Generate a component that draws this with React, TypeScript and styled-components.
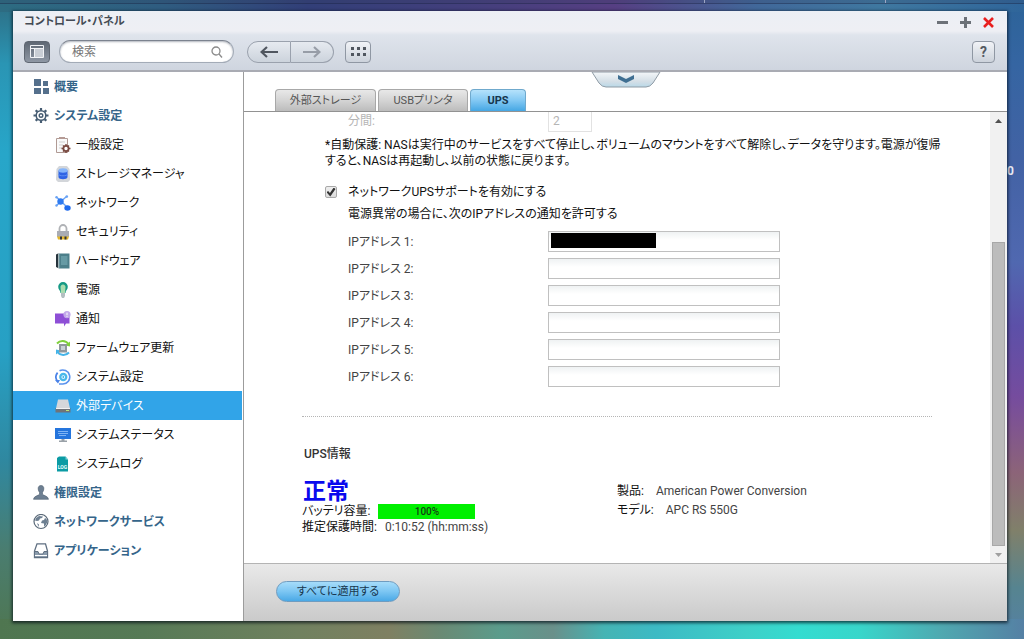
import React from "react";
import styled, { createGlobalStyle, css } from "styled-components";

const Global = createGlobalStyle`
  *, *::before, *::after { box-sizing: border-box; }
  html, body, #root { height: 100%; }
  body {
    margin: 0;
    font-family: Roboto, "Noto Sans CJK JP", sans-serif;
    font-size: 12px;
    line-height: 16px;
    color: #444;
    font-feature-settings: "palt";
  }
  button, input { font: inherit; font-feature-settings: inherit; color: inherit; margin: 0; }
  h1, h2, p, ul, dl, dd { margin: 0; padding: 0; }
  ul { list-style: none; }
`;

const Desktop = styled.div`
  position: relative;
  height: 100vh;
  min-height: 560px;
  display: flex;
  flex-direction: column;
  overflow: hidden;
  background:
    linear-gradient(90deg, #4f7650 0%, #567a56 14%, #70815f 29%, #7f8062 38%, #6a8a74 43%, #5a9c8c 49%, #6a908a 54%, #45b4b4 59%, #3cbac4 64%, #3ed0c8 73%, #34dcd0 78%, #38d6ca 84%, #4fa8b0 92%, #5580a4 100%) bottom / 100% 20px no-repeat,
    linear-gradient(90deg, #2d6c82 0%, #2f5c80 16%, #323f78 30%, #463f7d 48%, #563f83 60%, #41689a 74%, #3f78a0 86%, #2f659a 100%) top / 100% 12px no-repeat,
    linear-gradient(180deg, #2d6c82 0%, #2a95b4 10%, #27a6c9 24%, #27a0c4 55%, #2f88a0 72%, #4a7d70 86%, #4f7650 100%) left / 50% 100% no-repeat,
    linear-gradient(180deg, #2c6398 0%, #3565a2 10%, #4262a4 25%, #5068b0 41%, #5c50a8 51%, #754c9e 62%, #80558f 67%, #8c6478 74%, #80806a 83%, #568490 92%, #5580a4 100%);
`;

const DesktopBar = styled.div`
  flex: none;
  height: 4px;
  background: rgba(50, 60, 90, 0.2);
  border-bottom: 1px solid rgba(20, 30, 60, 0.35);
  display: flex;
  justify-content: flex-end;
  gap: 180px;
  padding-right: 138px;
`;

const BarTick = styled.i`
  width: 1px;
  height: 3px;
  background: #9da6c4;
`;

const DesktopLabel = styled.span`
  position: absolute;
  top: 163px;
  right: 10px;
  font-size: 12px;
  font-weight: 700;
  color: #e8eaf4;
`;

const Window = styled.main`
  position: relative;
  flex: 1;
  min-height: 0;
  margin: 7px 17px 18px 13px;
  display: flex;
  flex-direction: column;
  background: #fff;
  box-shadow: 0 1px 3px 1px rgba(0, 10, 20, 0.7);
`;

const Header = styled.header`
  flex: none;
  border-bottom: 2px solid #a9abb3;
  background: linear-gradient(180deg, #eceff5 0, #eeeff4 20px, #dfe4ec 24px, #cfd5df 100%);
`;

const TitleBar = styled.div`
  display: flex;
  align-items: center;
  justify-content: space-between;
  height: 22px;
  padding: 0 12px 0 11px;
`;

const Title = styled.h1`
  font-size: 11px;
  line-height: 16px;
  font-weight: 700;
  color: #444b54;
`;

const WindowButtons = styled.div`
  display: flex;
  gap: 10px;
`;

const WindowButton = styled.button`
  width: 13px;
  height: 13px;
  padding: 0;
  border: 0;
  background: none;
  display: grid;
  place-items: center;
`;

const Toolbar = styled.div`
  display: flex;
  align-items: center;
  height: 37px;
  padding: 0 12px 0 11px;
`;

const ToolButton = styled.button<{ $dark?: boolean }>`
  flex: none;
  width: 26px;
  height: 22px;
  padding: 0;
  display: grid;
  place-items: center;
  border: 1px solid ${(p) => (p.$dark ? "#5f6772" : "#8f97a3")};
  border-radius: 4px;
  background: ${(p) =>
    p.$dark ? "linear-gradient(180deg, #5f6874, #8e97a4)" : "linear-gradient(180deg, #f1f3f7, #ccd2db)"};
`;

const HelpButton = styled(ToolButton)`
  width: 23px;
  margin-left: auto;
  font-size: 14px;
  font-weight: 700;
  color: #555a62;
`;

const SearchBox = styled.label`
  display: flex;
  align-items: center;
  width: 175px;
  height: 23px;
  margin: 0 13px 0 9px;
  padding: 0 10px 0 12px;
  border: 1px solid #a3abb7;
  border-top-color: #7c838f;
  border-radius: 12px;
  background: #fff;
  box-shadow: inset 0 1px 2px rgba(60, 70, 90, 0.4);
`;

const SearchInput = styled.input`
  flex: 1;
  min-width: 0;
  padding: 0;
  border: 0;
  outline: 0;
  background: none;
  &::placeholder { color: #757575; opacity: 1; }
`;

const NavGroup = styled.div`
  display: flex;
  margin-right: 11px;
`;

const NavButton = styled.button<{ $side: "left" | "right" }>`
  width: ${(p) => (p.$side === "left" ? 44 : 43)}px;
  height: 22px;
  padding: 0;
  display: grid;
  place-items: center;
  color: ${(p) => (p.$side === "left" ? "#50565f" : "#979da7")};
  border: 1px solid #9aa1ad;
  background: linear-gradient(180deg, #e6eaf0, #ccd3dc);
  ${(p) =>
    p.$side === "left"
      ? css`border-radius: 11px 0 0 11px;`
      : css`border-left: 0; border-radius: 0 11px 11px 0;`}
`;

const Body = styled.div`
  flex: 1;
  min-height: 0;
  display: flex;
`;

const Sidebar = styled.nav`
  flex: none;
  width: 231px;
  border-right: 1px solid #9c9c9c;
`;

const NavItem = styled.a<{ $level: "group" | "item"; $active?: boolean }>`
  display: flex;
  align-items: center;
  gap: 5px;
  height: 29px;
  margin-right: 1px;
  text-decoration: none;
  padding-left: ${(p) => (p.$level === "group" ? 20 : 42)}px;
  font-weight: ${(p) => (p.$level === "group" ? 700 : 400)};
  color: ${(p) => (p.$active ? "#fff" : p.$level === "group" ? "#35658a" : "#111")};
  background: ${(p) => (p.$active ? "#31a4e8" : "transparent")};
  svg { flex: none; }
`;

const Content = styled.section`
  position: relative;
  flex: 1;
  min-width: 0;
  display: flex;
  flex-direction: column;
`;

const Drawer = styled.button`
  position: absolute;
  top: 0;
  left: 50%;
  margin-left: -35px;
  width: 70px;
  height: 16px;
  padding: 0;
  border: 0;
  background: none;
  svg { display: block; }
`;

const Tabs = styled.div`
  flex: none;
  display: flex;
  align-items: flex-end;
  gap: 2px;
  height: 40px;
  padding-left: 31px;
  border-bottom: 1px solid #929292;
`;

const Tab = styled.button<{ $width: number; $active?: boolean }>`
  width: ${(p) => p.$width}px;
  height: 22px;
  padding: 0;
  font-size: 11px;
  border: 1px solid ${(p) => (p.$active ? "#6fa9cd" : "#a8a8a8")};
  border-bottom: 0;
  border-radius: 4px 4px 0 0;
  color: ${(p) => (p.$active ? "#17364d" : "#555")};
  font-weight: ${(p) => (p.$active ? 700 : 400)};
  background: ${(p) =>
    p.$active ? "linear-gradient(180deg, #b5e2fb, #82c8f3 50%, #45a7e4)" : "linear-gradient(180deg, #e8e8e8, #d4d4d4 50%, #bcbcbc)"};
`;

const ScrollArea = styled.div`
  flex: 1;
  min-height: 0;
  display: flex;
  overflow: hidden;
`;

const Form = styled.form`
  flex: 1;
  min-width: 0;
  padding: 0 58px;
`;

const Indented = styled.div`
  padding-left: 23px;
`;

const Field = styled.div<{ $disabled?: boolean }>`
  display: flex;
  align-items: center;
  height: ${(p) => (p.$disabled ? 18 : 27)}px;
  padding-left: 23px;
  color: ${(p) => (p.$disabled ? "#b5b5b5" : "#444")};
`;

const FieldLabel = styled.label`
  width: 200px;
`;

const TextInput = styled.input<{ $short?: boolean }>`
  width: ${(p) => (p.$short ? 44 : 232)}px;
  height: 21px;
  padding: 0 4px;
  border: 1px solid ${(p) => (p.$short ? "#e2e2e2" : "#c0c0c0")};
  background: ${(p) => (p.$short ? "#fff" : "linear-gradient(180deg, #eff2f3, #fff 8px)")};
`;

const InputWrap = styled.div`
  position: relative;
  display: flex;
`;

const Redaction = styled.span`
  position: absolute;
  top: 2px;
  left: 3px;
  width: 105px;
  height: 15px;
  background: #000;
`;

const Note = styled.p`
  padding: 7px 0 15px;
  color: #111;
  white-space: nowrap;
`;

const CheckRow = styled.label`
  display: flex;
  align-items: center;
  gap: 11px;
  height: 16px;
  color: #111;
`;

const Checkbox = styled.input`
  appearance: none;
  width: 12px;
  height: 12px;
  border: 1px solid #a9a9a9;
  border-radius: 2px;
  background: linear-gradient(180deg, #eee, #dcdcdc);
  display: grid;
  place-items: center;
  &:checked::before {
    content: "";
    width: 9px;
    height: 9px;
    background: #333;
    clip-path: polygon(0 52%, 18% 38%, 38% 60%, 80% 0, 100% 16%, 42% 100%);
  }
`;

const Hint = styled.p`
  padding: 6px 0 6px 23px;
  color: #111;
`;

const Divider = styled.hr`
  height: 0;
  margin: 26px 0 29px;
  border: 0;
  border-top: 1px dotted #b5b5b5;
`;

const SectionTitle = styled.h2`
  font-size: 12px;
  line-height: 16px;
  font-weight: 500;
  color: #333;
  padding-left: 2px;
`;

const InfoGrid = styled.div`
  display: grid;
  grid-template-columns: 1fr 1fr;
  padding-top: 18px;
`;

const Status = styled.p`
  font-size: 23px;
  line-height: 23px;
  font-weight: 700;
  color: #0a0aee;
  padding-left: 1px;
`;

const InfoRow = styled.div<{ $height: number; $gap: number }>`
  display: flex;
  align-items: center;
  gap: ${(p) => p.$gap}px;
  height: ${(p) => p.$height}px;
  dt { color: #111; }
`;

const Gauge = styled.div`
  width: 97px;
  height: 15px;
  font-size: 10px;
  line-height: 15px;
  font-weight: 500;
  text-align: center;
  color: #143c14;
  background: #00f000;
`;

const Product = styled.dl`
  padding: 1px 0 0;
`;

const ScrollBar = styled.div`
  flex: none;
  width: 17px;
  display: flex;
  flex-direction: column;
  align-items: center;
  background: #f1f1f1;
`;

const ScrollButton = styled.button`
  width: 17px;
  height: 17px;
  padding: 0;
  border: 0;
  background: none;
  display: grid;
  place-items: center;
`;

const Track = styled.div`
  flex: 1;
  width: 13px;
  display: flex;
  flex-direction: column;
  justify-content: flex-end;
`;

const Thumb = styled.div`
  height: 73%;
  background: #bcbcbc;
  border: 1px solid #a8a8a8;
`;

const Footer = styled.footer`
  flex: none;
  height: 58px;
  padding: 17px 32px 0;
  border-top: 1px solid #b4b4b4;
  background: linear-gradient(180deg, #e9e9e9, #cacaca);
`;

const ApplyButton = styled.button`
  width: 124px;
  height: 21px;
  padding: 0;
  font-size: 11px;
  color: #17364d;
  border: 1px solid #6f9cc0;
  border-radius: 11px;
  background: linear-gradient(180deg, #a6dcfa, #7cc6f3 50%, #4aa9e6);
`;

const icons: Record<string, React.ReactNode> = {
  overview: (
    <g fill="#55708c">
      <path d="M1 0h7v7H1zM10 2h5v5h-5zM1 9h7v6H1zM10 9h6v6h-6z" />
    </g>
  ),
  gear: (
    <g fill="none" stroke="#465c72">
      <circle cx="8" cy="7.500" r="4.800" strokeWidth="1.500" />
      <circle cx="8" cy="7.500" r="1.800" strokeWidth="1.400" />
      <path strokeWidth="2.200" d="M8 0v2.600M8 12.400V15M.500 7.500h2.600M12.900 7.500h2.600M2.700 2.200l1.700 1.700M11.600 11.100l1.700 1.700M2.700 12.800l1.700-1.700M11.600 3.900l1.700-1.700" />
    </g>
  ),
  general: (
    <g>
      <path d="M1.500 1.500h11v14h-11z" fill="#fafafa" stroke="#b09a94" />
      <path d="M4 0h6v2H4z" fill="#b59a94" />
      <path d="M4 5h6M4 8h4M4 11h3" stroke="#cfcfcf" />
      <circle cx="11" cy="11.500" r="2.600" fill="#fff" stroke="#7a4a42" strokeWidth="1.800" />
      <path d="M11 7v2M11 14v2M6.500 11.500h2M13.500 11.500h2M8 8.500l1 1M13 13.500l1 1M8 14.500l1-1M13 9.500l1-1" stroke="#7a4a42" strokeWidth="1.400" />
    </g>
  ),
  storage: (
    <g>
      <path d="M4 0h8l2.500 3 .500 9v2l-2 2H3l-2-2v-2l.500-9z" fill="#d3d6da" />
      <path d="M3.500 4.500V11c0 3 9 3 9 0V4.500z" fill="#2f63e4" />
      <ellipse cx="8" cy="4.500" rx="4.500" ry="2.200" fill="#84b4fb" />
      <path d="M3.500 8c0 2.400 9 2.400 9 0" fill="none" stroke="#5a8cf5" />
    </g>
  ),
  network: (
    <g>
      <path d="M1.500 2L13 13M11.500 1.500L1.500 10.500" stroke="#6aa3f4" strokeWidth="1.400" />
      <circle cx="5.500" cy="6.500" r="3.200" fill="#2f7bf0" />
      <circle cx="1.500" cy="2.300" r="1.200" fill="#6aa3f4" />
      <circle cx="11.800" cy="1.600" r="1.300" fill="#6aa3f4" />
      <circle cx="1.500" cy="10.500" r="1.200" fill="#6aa3f4" />
      <ellipse cx="12.500" cy="13" rx="3.200" ry="2.700" fill="#1f6bee" />
    </g>
  ),
  lock: (
    <g>
      <path d="M4.500 8V4.500a3.500 3.500 0 017 0V8" fill="none" stroke="#b0b2b6" strokeWidth="1.800" />
      <path d="M2 7h12v6H2z" fill="#a9acb4" />
      <path d="M2 12.500h12l-1 3H3z" fill="#e4b62a" />
      <path d="M5 12.500h2v3H5zM9.500 12.500h2v3h-2z" fill="#33363b" />
    </g>
  ),
  hardware: (
    <g>
      <path d="M1 1.500l2.500-1.200v15L1 14z" fill="#27343c" />
      <path d="M4 .5h10.500v15H4z" fill="#4c7f8a" />
      <path d="M6 3h6.500v9H6z" fill="#669aa4" />
      <path d="M3.800 .5v15" stroke="#a9c0c5" />
    </g>
  ),
  bulb: (
    <g>
      <path d="M8 0a4.800 4.800 0 014.800 4.800c0 3-2.300 3.700-2.300 6.200h-5c0-2.500-2.300-3.200-2.300-6.200A4.800 4.800 0 018 0z" fill="#169a85" />
      <path d="M8 2.500A2.500 2.500 0 0110.500 5.500L10 11H6l-.5-5.500A2.500 2.500 0 018 2.500z" fill="#a9dcae" />
      <path d="M6 11h4v3l-1 2H7l-1-2z" fill="#b4bfc2" />
    </g>
  ),
  notice: (
    <g>
      <path d="M0 2.500h14.500v10H11L9 15.500v-3H0z" fill="#8e4fd6" />
      <circle cx="12" cy="3.600" r="3.600" fill="#c3a9ea" />
      <path d="M12 1.600v2.500M12 4.800v1" stroke="#fff" />
    </g>
  ),
  firmware: (
    <g>
      <path d="M2 3.500A7.500 7.500 0 0113.500 4" fill="none" stroke="#7fd03c" strokeWidth="2" />
      <path d="M15 1.500v5l-4.500-1z" fill="#7fd03c" />
      <path d="M14 12.500A7.500 7.500 0 012.500 12" fill="none" stroke="#45b4e8" strokeWidth="2" />
      <path d="M1 14.500v-5l4.500 1z" fill="#45b4e8" />
      <path d="M4 4h8v8.500H4z" fill="#8f979c" />
      <path d="M6 6h4v4H6z" fill="#c9d0d4" />
    </g>
  ),
  restore: (
    <g fill="none">
      <path d="M4.500 1.800A7 7 0 118 15H4" stroke="#5a93ee" strokeWidth="1.600" />
      <path d="M2.600 3.600a7 7 0 000 8.800" stroke="#4a83e8" strokeWidth="1.700" />
      <path d="M0 11h5l-2 3.500z" fill="#4a83e8" />
      <circle cx="8.300" cy="8" r="3" stroke="#4ab8ea" strokeWidth="2.300" />
      <circle cx="8.300" cy="8" r="1" fill="#3aaee8" />
    </g>
  ),
  device: (
    <g>
      <path d="M3 1.500h10l2 9H1z" fill="#d5d7da" />
      <path d="M.500 10h15v4.500H.500z" fill="#6f7378" />
      <path d="M1 10.500h14" stroke="#f2f2f2" />
      <path d="M11 12.500h3" stroke="#b9e27a" />
    </g>
  ),
  monitor: (
    <g>
      <path d="M0 1h16v11H0z" fill="#2575dd" />
      <path d="M3 4.500h10M3 6.500h10M4 8.500h7" stroke="#7fb4f5" />
      <path d="M6.500 12h3v1.500H12V15H4v-1.500h2.500z" fill="#9aa1a8" />
    </g>
  ),
  log: (
    <g>
      <path d="M2 2l2-1.500h6.500l2.500 3V15.500H2z" fill="#0b9ba4" />
      <path d="M10.500 .500l2.500 3h-2.500z" fill="#7fd0d4" />
      <text x="7.500" y="13" fontSize="5" fontWeight="700" textAnchor="middle" fill="#e8ffff">LOG</text>
    </g>
  ),
  user: (
    <path
      d="M8 .500c2 0 3 1.500 2.800 3.500-.1 1.500-.7 2.600-1.300 3.300v2c.8 1.200 5.700 1.700 6 5H.500c.3-3.300 5.200-3.800 6-5v-2C5.900 6.600 5.300 5.500 5.200 4 5 2 6 .500 8 .500z"
      fill="#6d7f92" stroke="#4b5c6d" strokeWidth=".6"
    />
  ),
  globe: (
    <g>
      <circle cx="8" cy="7.500" r="7" fill="#fff" stroke="#5b6a79" strokeWidth="1.200" />
      <path d="M3 4l3-2 4 .500-1 1.500-2 .500-1 2L4 7 2 6.500zM9 6.500l2-.5 1-2 1.500 1 1 3-2 3.500-1.500 1V9.500L8 9zM4 9l2 1.500-.500 2.500z" fill="#6d7f91" />
    </g>
  ),
  app: (
    <g>
      <path d="M4 .8h8.500L14.500 8v6.500h-13V8z" fill="#fff" stroke="#5f6f81" strokeWidth="1.300" />
      <path d="M1.500 8.500h3.500l1 2.500h4l1-2.500h3.500v6h-13z" fill="#8a9bac" stroke="#5f6f81" />
      <path d="M2 12.500h12" stroke="#fff" />
    </g>
  ),
};

type Item = { id: string; label: string; level: "group" | "item"; active?: boolean };

const items: Item[] = [
  { id: "overview", label: "概要", level: "group" },
  { id: "gear", label: "システム設定", level: "group" },
  { id: "general", label: "一般設定", level: "item" },
  { id: "storage", label: "ストレージマネージャ", level: "item" },
  { id: "network", label: "ネットワーク", level: "item" },
  { id: "lock", label: "セキュリティ", level: "item" },
  { id: "hardware", label: "ハードウェア", level: "item" },
  { id: "bulb", label: "電源", level: "item" },
  { id: "notice", label: "通知", level: "item" },
  { id: "firmware", label: "ファームウェア更新", level: "item" },
  { id: "restore", label: "システム設定", level: "item" },
  { id: "device", label: "外部デバイス", level: "item", active: true },
  { id: "monitor", label: "システムステータス", level: "item" },
  { id: "log", label: "システムログ", level: "item" },
  { id: "user", label: "権限設定", level: "group" },
  { id: "globe", label: "ネットワークサービス", level: "group" },
  { id: "app", label: "アプリケーション", level: "group" },
];

const Arrow = ({ flip }: { flip?: boolean }) => (
  <svg width="18" height="12" viewBox="0 0 18 12" fill="none" stroke="currentColor" strokeWidth="2.200">
    <path d={flip ? "M0 6h16M11 1l5.500 5-5.500 5" : "M18 6H2M7 1L1.500 6 7 11"} />
  </svg>
);

export default function App() {
  return (
    <>
      <Global />
      <Desktop>
        <DesktopBar>
          <BarTick />
          <BarTick />
        </DesktopBar>
        <DesktopLabel>0</DesktopLabel>
        <Window>
          <Header>
            <TitleBar>
              <Title>コントロール・パネル</Title>
              <WindowButtons>
                <WindowButton aria-label="最小化">
                  <svg width="13" height="13"><path d="M1 6.500h11" stroke="#6c7178" strokeWidth="3" /></svg>
                </WindowButton>
                <WindowButton aria-label="最大化">
                  <svg width="13" height="13"><path d="M1 6.500h11M6.500 1v11" stroke="#6c7178" strokeWidth="3" /></svg>
                </WindowButton>
                <WindowButton aria-label="閉じる">
                  <svg width="13" height="13"><path d="M2 2l9 9M11 2l-9 9" stroke="#e81e1e" strokeWidth="2.600" /></svg>
                </WindowButton>
              </WindowButtons>
            </TitleBar>
            <Toolbar>
              <ToolButton $dark aria-label="サイドバー">
                <svg width="14" height="13" fill="none" stroke="#f1f3f6">
                  <path d="M.500 .500h13v12H.500zM.500 3.500h13M4.500 3.500v9" />
                  <path d="M5 4h8v8H5z" fill="#c9ced5" stroke="none" />
                </svg>
              </ToolButton>
              <SearchBox>
                <SearchInput type="text" placeholder="検索" aria-label="検索" />
                <svg width="12" height="12" fill="none" stroke="#8a8a8a" strokeWidth="1.300">
                  <circle cx="5" cy="5" r="4" />
                  <path d="M8 8l3 3.500" />
                </svg>
              </SearchBox>
              <NavGroup>
                <NavButton $side="left" aria-label="戻る"><Arrow /></NavButton>
                <NavButton $side="right" aria-label="進む"><Arrow flip /></NavButton>
              </NavGroup>
              <ToolButton aria-label="一覧">
                <svg width="15" height="9" fill="#50565f">
                  <path d="M0 0h3v3H0zM6 0h3v3H6zM12 0h3v3h-3zM0 6h3v3H0zM6 6h3v3H6zM12 6h3v3h-3z" />
                </svg>
              </ToolButton>
              <HelpButton aria-label="ヘルプ">?</HelpButton>
            </Toolbar>
          </Header>
          <Body>
            <Sidebar>
              <ul>
                {items.map((it) => (
                  <li key={it.id}>
                    <NavItem href="#" $level={it.level} $active={it.active}>
                      <svg width="16" height="16" viewBox="0 0 16 16">{icons[it.id]}</svg>
                      {it.label}
                    </NavItem>
                  </li>
                ))}
              </ul>
            </Sidebar>
            <Content>
              <Drawer aria-label="開く">
                <svg width="70" height="16" viewBox="0 0 70 16">
                  <defs>
                    <linearGradient id="drawer" x1="0" y1="0" x2="0" y2="1">
                      <stop offset="0" stopColor="#f4f7f9" />
                      <stop offset=".65" stopColor="#d3dee6" />
                      <stop offset="1" stopColor="#b9d9e8" />
                    </linearGradient>
                  </defs>
                  <path d="M1 0L8 11q3 4 7 4h40q4 0 7-4L69 0z" fill="url(#drawer)" stroke="#8f9ba5" />
                  <path d="M27 3l8 4 8-4v4l-8 4-8-4z" fill="#3f6f92" />
                </svg>
              </Drawer>
              <Tabs role="tablist">
                <Tab role="tab" $width={101}>外部ストレージ</Tab>
                <Tab role="tab" $width={90}>USBプリンタ</Tab>
                <Tab role="tab" $width={56} $active>UPS</Tab>
              </Tabs>
              <ScrollArea>
                <Form onSubmit={(e) => e.preventDefault()}>
                  <Indented>
                    <Field $disabled>
                      <FieldLabel htmlFor="minutes">分間:</FieldLabel>
                      <TextInput id="minutes" $short disabled defaultValue="2" />
                    </Field>
                    <Note>
                      *自動保護: NASは実行中のサービスをすべて停止し、ボリュームのマウントをすべて解除し、データを守ります。電源が復帰
                      <br />
                      すると、NASは再起動し、以前の状態に戻ります。
                    </Note>
                    <CheckRow>
                      <Checkbox type="checkbox" defaultChecked />
                      ネットワークUPSサポートを有効にする
                    </CheckRow>
                    <Hint>電源異常の場合に、次のIPアドレスの通知を許可する</Hint>
                    {[1, 2, 3, 4, 5, 6].map((n) => (
                      <Field key={n}>
                        <FieldLabel htmlFor={`ip${n}`}>IPアドレス {n}:</FieldLabel>
                        <InputWrap>
                          <TextInput id={`ip${n}`} type="text" />
                          {n === 1 && <Redaction />}
                        </InputWrap>
                      </Field>
                    ))}
                  </Indented>
                  <Divider />
                  <SectionTitle>UPS情報</SectionTitle>
                  <InfoGrid>
                    <div>
                      <Status>正常</Status>
                      <dl>
                        <InfoRow $height={16} $gap={8}>
                          <dt>バッテリ容量:</dt>
                          <dd><Gauge>100%</Gauge></dd>
                        </InfoRow>
                        <InfoRow $height={16} $gap={8}>
                          <dt>推定保護時間:</dt>
                          <dd>0:10:52 (hh:mm:ss)</dd>
                        </InfoRow>
                      </dl>
                    </div>
                    <Product>
                      <InfoRow $height={19} $gap={12}>
                        <dt>製品:</dt>
                        <dd>American Power Conversion</dd>
                      </InfoRow>
                      <InfoRow $height={19} $gap={12}>
                        <dt>モデル:</dt>
                        <dd>APC RS 550G</dd>
                      </InfoRow>
                    </Product>
                  </InfoGrid>
                </Form>
                <ScrollBar>
                  <ScrollButton type="button" aria-label="上へ">
                    <svg width="7" height="4"><path d="M0 4l3.500-4L7 4z" fill="#505050" /></svg>
                  </ScrollButton>
                  <Track><Thumb /></Track>
                  <ScrollButton type="button" aria-label="下へ">
                    <svg width="7" height="4"><path d="M0 0l3.500 4L7 0z" fill="#a0a0a0" /></svg>
                  </ScrollButton>
                </ScrollBar>
              </ScrollArea>
              <Footer>
                <ApplyButton>すべてに適用する</ApplyButton>
              </Footer>
            </Content>
          </Body>
        </Window>
      </Desktop>
    </>
  );
}
